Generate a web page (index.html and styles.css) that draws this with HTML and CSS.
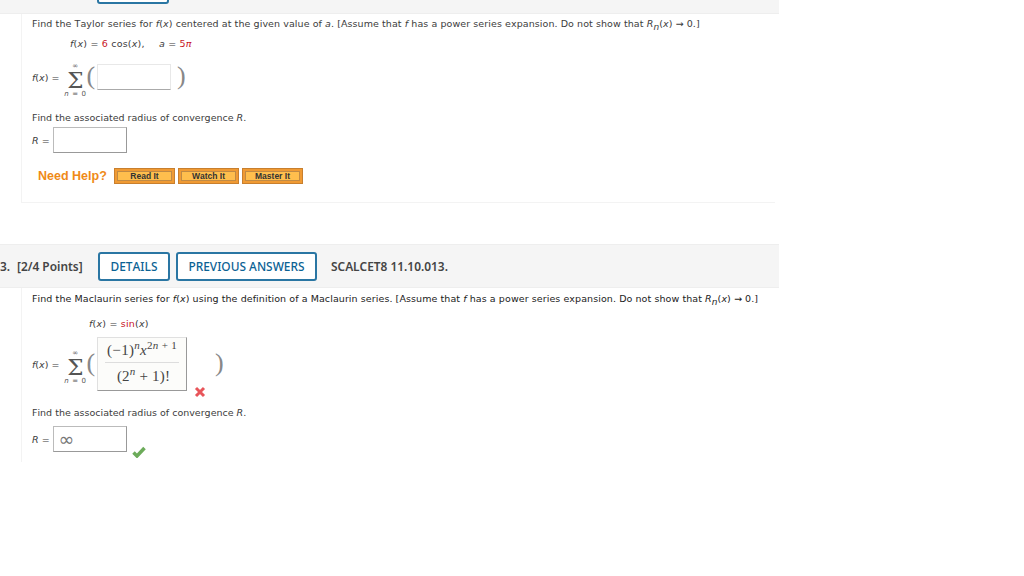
FILE: index.html
```html
<!DOCTYPE html>
<html lang="en">

<head>
    <meta charset="UTF-8">
    <meta name="viewport" content="width=device-width, initial-scale=1.0">
    <title>Assignment questions</title>
    <link rel="stylesheet" href="styles.css">
</head>

<body>
    <div class="page">
        <div class="qhead cut">
            <span class="btn stub"></span>
        </div>
        <div class="qbody first">
            <p class="line long">Find the Taylor series for <i>f</i>(<i>x</i>) centered at the given value of <i>a</i>. [Assume that <i>f</i> has a power series expansion. Do not show that <i>R<sub>n</sub></i>(<i>x</i>) → 0.]</p>
            <p class="given g1"><i>f</i>(<i>x</i>) = <span class="red">6</span> cos(<i>x</i>), <span class="a"><i>a</i> = <span class="red">5<i>π</i></span></span></p>
            <div class="series s1">
                <span><i>f</i>(<i>x</i>) =</span>
                <span class="sigma"><small>∞</small><b>Σ</b><small><i>n</i> = 0</small></span>
                <span class="paren">(</span>
                <span class="answer empty"></span>
                <span class="paren">)</span>
            </div>
            <p class="line r1">Find the associated radius of convergence <i>R</i>.</p>
            <div class="rrow">
                <span><i>R</i> =</span>
                <span class="rbox"></span>
            </div>
            <div class="help">
                <span class="need">Need Help?</span>
                <span class="hbtn">Read It</span>
                <span class="hbtn">Watch It</span>
                <span class="hbtn">Master It</span>
            </div>
        </div>

        <div class="qhead">
            <span class="num">3.</span>
            <span class="pts">[2/4 Points]</span>
            <span class="btn">DETAILS</span>
            <span class="btn wide">PREVIOUS ANSWERS</span>
            <span class="code">SCALCET8 11.10.013.</span>
        </div>
        <div class="qbody second">
            <p class="line long dark">Find the Maclaurin series for <i>f</i>(<i>x</i>) using the definition of a Maclaurin series. [Assume that <i>f</i> has a power series expansion. Do not show that <i>R<sub>n</sub></i>(<i>x</i>) → 0.]</p>
            <p class="given g2"><i>f</i>(<i>x</i>) = <span class="red">sin</span>(<i>x</i>)</p>
            <div class="series s2">
                <span><i>f</i>(<i>x</i>) =</span>
                <span class="sigma"><small>∞</small><b>Σ</b><small><i>n</i> = 0</small></span>
                <span class="paren">(</span>
                <span class="answer filled">
                    <span class="frac">
                        <span class="top">(−1)<sup><i>n</i></sup><i>x</i><sup>2<i>n</i> + 1</sup></span>
                        <span class="bottom">(2<sup><i>n</i></sup> + 1)!</span>
                    </span>
                </span>
                <svg class="cross" width="12" height="12" viewBox="0 0 12 12">
                    <path d="M2 2 L10 10 M10 2 L2 10" stroke="#e8555a" stroke-width="3" fill="none"/>
                </svg>
                <span class="paren close">)</span>
            </div>
            <p class="line r2">Find the associated radius of convergence <i>R</i>.</p>
            <div class="rrow r2row">
                <span><i>R</i> =</span>
                <span class="rbox val">∞</span>
                <svg class="check" width="14" height="12" viewBox="0 0 14 12">
                    <path d="M1.5 6.5 L5 10 L12.5 2" stroke="#6cab5a" stroke-width="3.5" fill="none"/>
                </svg>
            </div>
        </div>
    </div>
</body>

</html>
```

FILE: styles.css
```css
body {
    margin: 0;
    background: white;
    color: #3c3c3c;
    font-family: "DejaVu Sans", Verdana, sans-serif;
    font-size: 9.5px;
    font-kerning: none;
}
.page {
    width: 779px;
}
p {
    margin: 0;
}
sub {
    font-size: 9px;
    line-height: 0;
}
.red {
    color: #c8141e;
}

.qhead {
    height: 42px;
    display: flex;
    align-items: center;
    background: #f5f5f5;
    border-top: 1px solid #eee;
    border-bottom: 1px solid #eee;
    font-family: "Noto Sans", "Open Sans", sans-serif;
    font-size: 11.9px;
    font-weight: 600;
    color: #444;
}
.qhead.cut {
    height: 13px;
    border-top: 0;
    align-items: flex-end;
    overflow: hidden;
}
.num {
    width: 17px;
}
.pts {
    width: 81px;
}
.btn {
    box-sizing: border-box;
    height: 29px;
    width: 72px;
    margin-right: 6px;
    border: 2px solid #2a76a3;
    border-radius: 3px;
    background: white;
    color: #0b6294;
    font-weight: 500;
    display: flex;
    align-items: center;
    justify-content: center;
}
.btn.wide {
    width: 141px;
}
.btn.stub {
    margin-left: 97px;
    margin-bottom: 9px;
    flex: none;
}
.code {
    margin-left: 8px;
}

.qbody {
    margin-left: 21px;
    border-left: 1px solid #f3f3f3;
    padding-left: 10px;
}
.qbody.first {
    width: 743px;
    height: 188px;
    margin-bottom: 41px;
    border-bottom: 1px solid #f3f3f3;
}
.qbody.second {
    height: 174px;
}
.first > .line:first-child {
    padding-top: 4px;
}
.second > .line:first-child {
    padding-top: 5px;
}
.line {
    line-height: 12px;
}
.long {
    letter-spacing: 0.08px;
}
.dark {
    color: #222;
}
.given {
    line-height: 12px;
    letter-spacing: 0.2px;
}
.g1 {
    margin: 8px 0 0 38px;
}
.g2 {
    margin: 13px 0 0 57px;
}
.a {
    margin-left: 11px;
}

.series {
    display: flex;
    align-items: center;
}
.s1 {
    margin-top: 5px;
    height: 44px;
}
.s2 {
    margin-top: 3px;
    height: 62px;
}
.sigma {
    width: 22px;
    margin-left: 5px;
    margin-top: 5px;
    display: flex;
    flex-direction: column;
    align-items: center;
    color: #555;
}
.sigma b {
    font-family: "DejaVu Serif", serif;
    font-size: 23px;
    font-weight: normal;
    line-height: 20px;
}
.sigma small {
    font-size: 7px;
    line-height: 8px;
    letter-spacing: 0.6px;
    white-space: nowrap;
}
.paren {
    font-family: "Liberation Serif", serif;
    font-size: 26px;
    font-weight: normal;
    color: #888;
    margin-top: -3px;
}
.answer {
    display: block;
    box-sizing: border-box;
    width: 74px;
    margin-left: 2px;
    border: 1px solid #e8e8e8;
    border-bottom-color: #aaa;
}
.answer.empty {
    height: 26px;
    margin-right: 6px;
}
.answer.filled {
    width: 90px;
    height: 54px;
    margin-left: 2px;
    margin-top: -1px;
    border-color: #e0e0e0;
    border-right-color: #999;
    border-bottom-color: #999;
    background: #fcfcfa;
    display: flex;
    justify-content: center;
    align-items: center;
}
.frac {
    width: 74px;
    display: flex;
    flex-direction: column;
    align-items: center;
    font-family: "Liberation Serif", serif;
    font-size: 15px;
    color: #444;
}
.frac sup {
    font-size: 11px;
    line-height: 0;
}
.frac .top {
    width: 100%;
    text-align: center;
    line-height: 24px;
    letter-spacing: 0.3px;
    border-bottom: 1px solid #ddd;
    white-space: nowrap;
}
.frac .bottom {
    line-height: 26px;
    letter-spacing: 0.2px;
    padding-left: 3px;
    white-space: nowrap;
}
.cross {
    margin: 56px 0 0 7px;
    flex: none;
}
.paren.close {
    margin-left: 9px;
}

.r1 {
    margin-top: 13px;
}
.r2 {
    margin-top: 12px;
}
.rrow {
    display: flex;
    align-items: center;
    gap: 3px;
    height: 26px;
    margin-top: 3px;
}
.r2row {
    margin-top: 7px;
}
.rbox {
    box-sizing: border-box;
    width: 74px;
    height: 26px;
    border: 1px solid #bbb;
    border-right-color: #999;
    border-bottom-color: #999;
}
.rbox.val {
    font-size: 19px;
    line-height: 24px;
    padding-left: 5px;
    color: #777;
}
.check {
    margin: 26px 0 0 2px;
    flex: none;
}

.help {
    display: flex;
    align-items: center;
    margin-top: 15px;
    padding-left: 6px;
    gap: 3px;
}
.need {
    font-family: "Liberation Sans", Arial, sans-serif;
    font-size: 12.5px;
    font-weight: bold;
    color: #ef8a17;
    width: 73px;
}
.hbtn {
    box-sizing: border-box;
    width: 61px;
    height: 16px;
    background: #ffbe4d;
    border: 1px solid #c87f2e;
    box-shadow: inset 0 0 0 2px #f09a33, inset 0 0 0 3px #c08a45;
    font-family: "Liberation Sans", Arial, sans-serif;
    font-size: 8.5px;
    font-weight: bold;
    color: #333;
    display: flex;
    align-items: center;
    justify-content: center;
}
```
